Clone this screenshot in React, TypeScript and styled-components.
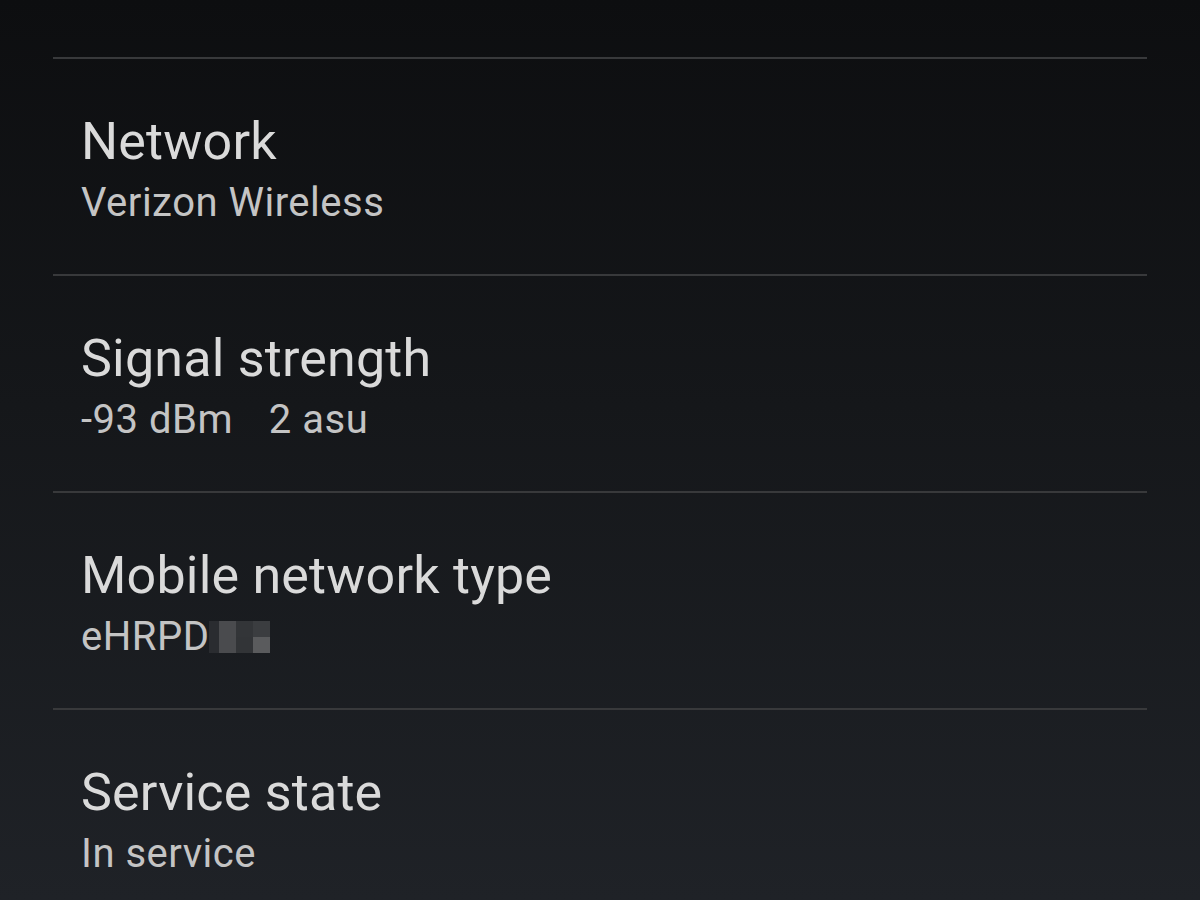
import React from "react";
import styled, { createGlobalStyle } from "styled-components";

const GlobalStyle = createGlobalStyle`
  html, body {
    margin: 0;
    padding: 0;
    height: 100%;
    overflow: hidden;
  }
  body {
    background: linear-gradient(180deg, #0d0e10 0%, #15171a 45%, #1f2227 100%);
    font-family: Roboto, "Noto Sans", sans-serif;
  }
`;

const Screen = styled.div`
  width: 1200px;
  height: 900px;
  overflow: hidden;
  padding: 0 53px;
  box-sizing: border-box;
`;

const List = styled.div`
  display: flex;
  flex-direction: column;
  margin-top: -160px;
`;

const Row = styled.div<{ $first?: boolean }>`
  height: 217px;
  box-sizing: border-box;
  padding: 52px 28px 0;
  border-top: ${(p) => (p.$first ? "none" : "2px solid #38393b")};
  display: flex;
  flex-direction: column;
`;

const Title = styled.div`
  font-size: 52px;
  line-height: 62px;
  letter-spacing: 0.2px;
  color: #dadada;
`;

const Summary = styled.div`
  margin-top: 6px;
  font-size: 40px;
  line-height: 48px;
  letter-spacing: 0.5px;
  color: #c4c4c4;
  display: flex;
  align-items: center;
  white-space: pre;
`;

const Redacted = styled.span`
  display: inline-grid;
  grid-template-columns: 10px 17px 17px 17px;
  grid-template-rows: 16px 16px;
`;

const Pixel = styled.span<{ $c: string }>`
  background: ${(p) => p.$c};
`;

const blocks = [
  "#2a2c30", "#4a4b4e", "#333538", "#3b3d40",
  "#2a2c30", "#4a4b4e", "#323437", "#5a5b5d",
];

type Item = { title: string; summary: React.ReactNode };

const items: Item[] = [
  { title: "My phone number", summary: "Unknown" },
  { title: "Network", summary: "Verizon Wireless" },
  { title: "Signal strength", summary: "-93 dBm   \u200a2 asu" },
  {
    title: "Mobile network type",
    summary: (
      <>
        eHRPD
        <Redacted>
          {blocks.map((c, i) => (
            <Pixel key={i} $c={c} />
          ))}
        </Redacted>
      </>
    ),
  },
  { title: "Service state", summary: "In service" },
];

export default function App() {
  return (
    <Screen>
      <GlobalStyle />
      <List>
        {items.map((it, i) => (
          <Row key={i} $first={i === 0}>
            <Title>{it.title}</Title>
            <Summary>{it.summary}</Summary>
          </Row>
        ))}
      </List>
    </Screen>
  );
}
